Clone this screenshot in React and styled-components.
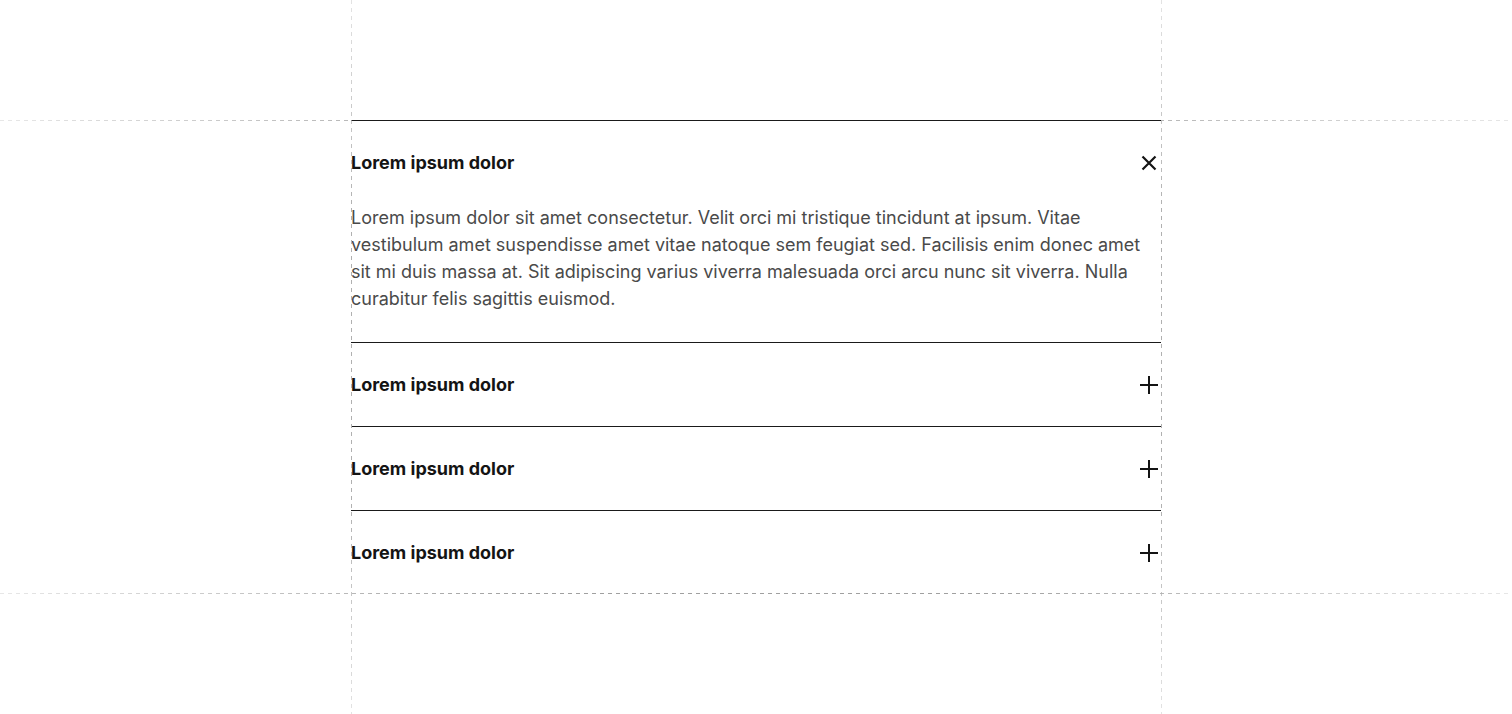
import React, { useState } from 'react';
import styled, { createGlobalStyle } from 'styled-components';

const GlobalStyle = createGlobalStyle`
    html, body {
        margin: 0;
        padding: 0;
        background: #ffffff;
    }
    body {
        font-family: Inter, "Noto Sans", sans-serif;
        -webkit-font-smoothing: antialiased;
    }
`

const Page = styled.div`
    position: relative;
    width: 100%;
    min-height: 714px;
    overflow: hidden;
    display: grid;
    grid-template-columns: 351px 810px 1fr;
    grid-template-rows: 120px auto 1fr;
`

const Guide = styled.div`
    position: absolute;
    pointer-events: none;
    ${({ $vertical, $at }) => $vertical ? `
        z-index: 2;
        top: 0;
        bottom: 0;
        left: ${$at}px;
        width: 1px;
        background: repeating-linear-gradient(to bottom, #b0b0b0 0 4px, transparent 4px 8px);
        -webkit-mask-image: linear-gradient(to bottom, rgba(0,0,0,0.35), #000 30%, #000 70%, rgba(0,0,0,0.35));
    ` : `
        z-index: 0;
        left: 0;
        right: 0;
        top: ${$at}px;
        height: 1px;
        background: repeating-linear-gradient(to right, #a0a0a0 0 4px, transparent 4px 8px);
        -webkit-mask-image: linear-gradient(to right, rgba(0,0,0,0.25), #000 35%, #000 65%, rgba(0,0,0,0.25));
    `}
`

const Accordion = styled.div`
    position: relative;
    z-index: 1;
    grid-column: 2;
    grid-row: 2;
    border-top: 1px solid #1a1a1a;
`

const Item = styled.div`
    border-bottom: 1px solid #1a1a1a;
    padding: 30px 0 29px;
    &:last-child {
        border-bottom: none;
        padding-bottom: 30px;
    }
`

const Header = styled.button`
    all: unset;
    box-sizing: border-box;
    width: 100%;
    height: 24px;
    display: flex;
    align-items: center;
    justify-content: space-between;
    cursor: pointer;
`

const Title = styled.span`
    font-size: 18px;
    font-weight: 700;
    line-height: 24px;
    color: #141414;
`

const Icon = styled.svg`
    width: 24px;
    height: 24px;
    flex: none;
    stroke: #141414;
    stroke-width: ${({ $open }) => ($open ? 2.2 : 2)};
    fill: none;
`

const Body = styled.p`
    margin: 29px 0 1px;
    font-size: 18px;
    line-height: 27px;
    font-weight: 400;
    color: #4a4a4a;
`

const items = [
    {
        title: 'Lorem ipsum dolor',
        text: 'Lorem ipsum dolor sit amet consectetur. Velit orci mi tristique tincidunt at ipsum. Vitae vestibulum amet suspendisse amet vitae natoque sem feugiat sed. Facilisis enim donec amet sit mi duis massa at. Sit adipiscing varius viverra malesuada orci arcu nunc sit viverra. Nulla curabitur felis sagittis euismod.',
    },
    { title: 'Lorem ipsum dolor', text: 'Lorem ipsum dolor sit amet consectetur.' },
    { title: 'Lorem ipsum dolor', text: 'Lorem ipsum dolor sit amet consectetur.' },
    { title: 'Lorem ipsum dolor', text: 'Lorem ipsum dolor sit amet consectetur.' },
];

const Toggle = ({ open }) => (
    <Icon viewBox="0 0 24 24" $open={open}>
        {open ? (
            <path d="M5.5 5.5L18.5 18.5M18.5 5.5L5.5 18.5" />
        ) : (
            <path d="M12 3V21M3 12H21" />
        )}
    </Icon>
);

const App = () => {
    const [open, setOpen] = useState(0);
    return (
        <Page>
            <GlobalStyle />
            <Accordion>
                {items.map((item, i) => (
                    <Item key={i}>
                        <Header onClick={() => setOpen(open === i ? -1 : i)}>
                            <Title>{item.title}</Title>
                            <Toggle open={open === i} />
                        </Header>
                        {open === i && <Body>{item.text}</Body>}
                    </Item>
                ))}
            </Accordion>
            <Guide $vertical $at={351} />
            <Guide $vertical $at={1161} />
            <Guide $at={120} />
            <Guide $at={593} />
        </Page>
    );
}

export default App;
